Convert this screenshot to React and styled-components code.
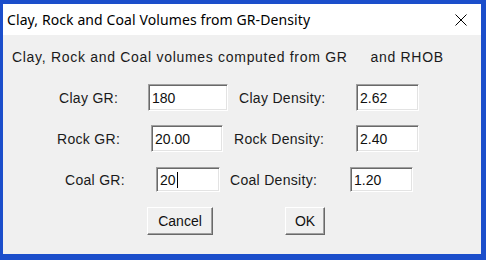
import React from 'react';
import styled, { createGlobalStyle } from 'styled-components';

const GlobalStyle = createGlobalStyle`
    html, body {
        margin: 0;
        padding: 0;
        background: #1b4ecb;
    }
    * {
        box-sizing: border-box;
    }
`;

const Window = styled.div`
    width: 486px;
    height: 260px;
    display: flex;
    flex-direction: column;
    border-style: solid;
    border-color: #1b4ecb;
    border-width: 4px 5px 6px 3px;
    background: #1b4ecb;
`;

const TitleBar = styled.div`
    height: 31px;
    flex: none;
    display: flex;
    align-items: center;
    justify-content: space-between;
    background: #ffffff;
    padding: 0 14px 0 4px;
`;

const Title = styled.div`
    font-family: "Noto Sans", "Open Sans", sans-serif;
    font-size: 14px;
    letter-spacing: 0.1px;
    color: #000;
    white-space: nowrap;
`;

const Body = styled.div`
    flex: 1;
    background: #f0f0f0;
    display: flex;
    flex-direction: column;
    padding-top: 14px;
    font-family: "Liberation Sans", Arial, sans-serif;
    font-size: 14px;
    color: #1a1a1a;
`;

const Header = styled.div`
    height: 16px;
    line-height: 16px;
    padding-left: 9px;
    letter-spacing: 0.7px;
    white-space: pre;
    margin-bottom: 19px;
`;

const Row = styled.div`
    display: flex;
    align-items: center;
    padding-left: ${p => p.$left}px;
    margin-bottom: ${p => p.$below}px;
`;

const Label = styled.div`
    width: ${p => p.$w}px;
    padding-left: ${p => p.$pad || 0}px;
    letter-spacing: 0.3px;
    white-space: nowrap;
`;

const Field = styled.div`
    width: ${p => p.$w}px;
    height: ${p => p.$h || 27}px;
    background: #fff;
    border-top: 1px solid #a0a0a0;
    border-left: 1px solid #a0a0a0;
    border-right: 1px solid #fff;
    border-bottom: 1px solid #fff;
    box-shadow: inset 1px 1px 0 #696969, inset -1px -1px 0 #e3e3e3;
    display: flex;
    align-items: center;
    padding-left: 3px;
    color: #101010;
`;

const Caret = styled.span`
    display: inline-block;
    width: 1px;
    height: 16px;
    background: #000;
    margin-left: 1px;
`;

const Button = styled.div`
    width: ${p => p.$w}px;
    height: 28px;
    display: flex;
    align-items: center;
    justify-content: center;
    background: #f0f0f0;
    border-top: 1px solid #fff;
    border-left: 1px solid #fff;
    border-right: 1px solid #696969;
    border-bottom: 1px solid #696969;
    box-shadow: inset -1px -1px 0 #a0a0a0;
    color: #101010;
`;

const CloseIcon = () => (
    <svg width="12" height="12" viewBox="0 0 12 12">
        <path d="M0.5 0.5 L11.5 11.5 M11.5 0.5 L0.5 11.5" stroke="#000" strokeWidth="1" fill="none" />
    </svg>
);

const rows = [
    { left: 56, below: 14, h: 27, a: ['Clay GR:', 89, 80, '180'], b: ['Clay Density:', 128, 11, '2.62'] },
    { left: 54, below: 15, h: 27, a: ['Rock GR:', 94, 72, '20.00'], b: ['Rock Density:', 133, 11, '2.40'] },
    { left: 62, below: 15, h: 25, a: ['Coal GR:', 91, 64, '20'], b: ['Coal Density:', 130, 10, '1.20'], caret: true },
];

export default function App() {
    return (
        <>
            <GlobalStyle />
            <Window>
                <TitleBar>
                    <Title>Clay, Rock and Coal Volumes from GR-Density</Title>
                    <CloseIcon />
                </TitleBar>
                <Body>
                    <Header>Clay, Rock and Coal volumes computed from GR     and RHOB</Header>
                    {rows.map((r, i) => (
                        <Row key={i} $left={r.left} $below={r.below}>
                            <Label $w={r.a[1]}>{r.a[0]}</Label>
                            <Field $w={r.a[2]} $h={r.h}>
                                {r.a[3]}
                                {r.caret && <Caret />}
                            </Field>
                            <Label $w={r.b[1]} $pad={r.b[2]}>{r.b[0]}</Label>
                            <Field $w={63} $h={r.h}>{r.b[3]}</Field>
                        </Row>
                    ))}
                    <Row $left={144} $below={0}>
                        <Button $w={66}>Cancel</Button>
                        <Label $w={72} />
                        <Button $w={40}>OK</Button>
                    </Row>
                </Body>
            </Window>
        </>
    );
}
